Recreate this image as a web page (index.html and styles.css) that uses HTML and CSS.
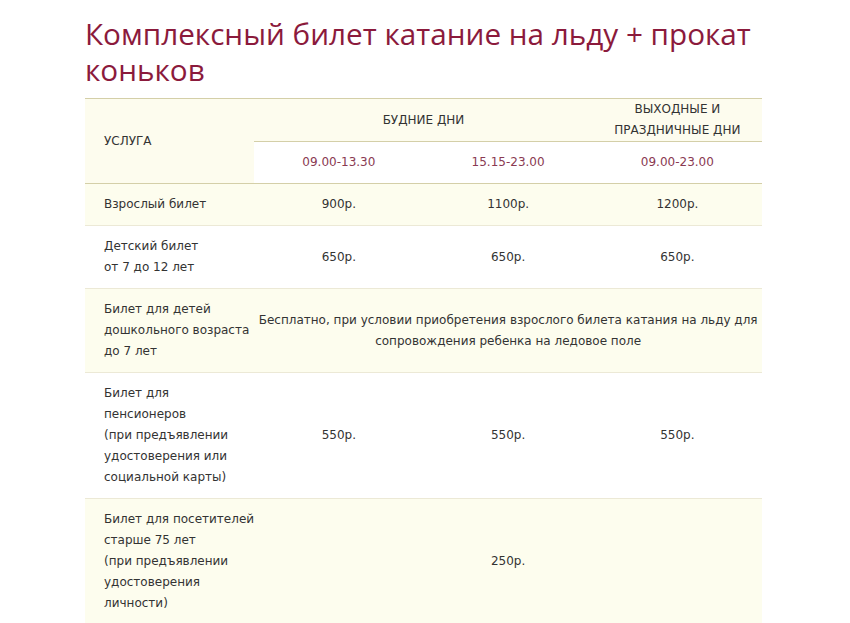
FILE: index.html
```html
<!DOCTYPE html>
<html lang="ru">
<head>
<meta charset="utf-8">
<link rel="stylesheet" href="styles.css">
</head>
<body>
<div class="page">
  <h1 class="title">Комплексный билет катание на льду + прокат коньков</h1>
  <table class="prices">
    <colgroup><col class="c"><col class="c"><col class="c"><col class="c"></colgroup>
    <thead>
      <tr class="h1row">
        <th class="service" rowspan="2">УСЛУГА</th>
        <th colspan="2">БУДНИЕ ДНИ</th>
        <th>ВЫХОДНЫЕ И<br>ПРАЗДНИЧНЫЕ ДНИ</th>
      </tr>
      <tr class="h2row">
        <th>09.00-13.30</th>
        <th>15.15-23.00</th>
        <th>09.00-23.00</th>
      </tr>
    </thead>
    <tbody>
      <tr class="odd">
        <td class="name">Взрослый билет</td>
        <td>900р.</td><td>1100р.</td><td>1200р.</td>
      </tr>
      <tr class="even">
        <td class="name">Детский билет<br>от 7 до 12 лет</td>
        <td>650р.</td><td>650р.</td><td>650р.</td>
      </tr>
      <tr class="odd">
        <td class="name">Билет для детей<br>дошкольного возраста<br>до 7 лет</td>
        <td class="free" colspan="3">Бесплатно, при условии приобретения взрослого билета катания на льду для<br>сопровождения ребенка на ледовое поле</td>
      </tr>
      <tr class="even">
        <td class="name">Билет для<br>пенсионеров<br>(при предъявлении<br>удостоверения или<br>социальной карты)</td>
        <td>550р.</td><td>550р.</td><td>550р.</td>
      </tr>
      <tr class="odd">
        <td class="name">Билет для посетителей<br>старше 75 лет<br>(при предъявлении<br>удостоверения<br>личности)</td>
        <td colspan="3">250р.</td>
      </tr>
    </tbody>
  </table>
</div>
</body>
</html>
```
FILE: styles.css
```css
html, body {
  margin: 0;
  padding: 0;
  background: #ffffff;
}
.page {
  padding: 16px 0 0 85px;
  width: 677px;
}
.title {
  margin: 0 0 10px 0;
  font-family: "Open Sans", "DejaVu Sans", sans-serif;
  font-weight: 400;
  font-size: 29.7px;
  line-height: 36px;
  color: #8b1a3c;
}
.prices {
  width: 677px;
  border-collapse: collapse;
  table-layout: fixed;
  font-family: "DejaVu Sans", sans-serif;
  font-size: 12px;
  line-height: 21px;
  color: #333333;
}
.prices th, .prices td {
  padding: 10px 6px;
  text-align: center;
  vertical-align: middle;
  font-weight: normal;
}
.prices thead tr.h1row {
  background: #fdfcee;
  border-top: 1px solid #d4cfa8;
}
.prices thead tr.h1row th {
  padding: 0 6px;
  border-bottom: 1px solid #d4cfa8;
}
.prices thead tr.h1row th.service {
  text-align: left;
  padding-left: 19px;
  background: #fdfcee;
  border-bottom: 1px solid #d4cfa8;
}
.prices thead tr.h2row th {
  background: #ffffff;
  color: #8a3a52;
  border-bottom: 1px solid #d4cfa8;
}
.prices tbody tr {
  border-bottom: 1px solid #ece9d6;
}
.prices tbody tr.odd {
  background: #fdfdee;
}
.prices tbody tr.even {
  background: #ffffff;
}
.prices td.name {
  text-align: left;
  padding-left: 19px;
  padding-right: 0;
  white-space: nowrap;
}
.prices td.free {
  padding-left: 0;
  padding-right: 0;
  white-space: nowrap;
}
```
